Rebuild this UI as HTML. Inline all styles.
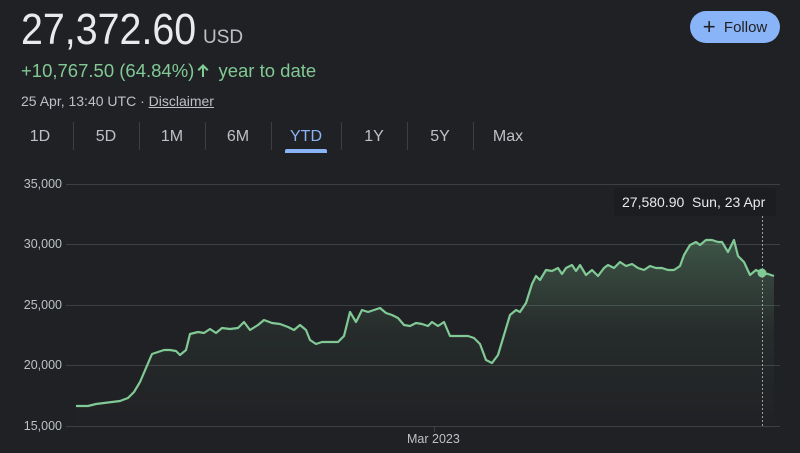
<!DOCTYPE html>
<html><head><style>
body{margin:0;width:800px;height:453px;background:#202124;font-family:"Liberation Sans",Arial,sans-serif;overflow:hidden;position:relative;color:#e8eaed}
.a{position:absolute;white-space:nowrap}
.tab{position:absolute;top:128px;font-size:16px;color:#bdc1c6;transform:translateX(-50%)}
.sep{position:absolute;top:122px;width:1px;height:28px;background:#3c4043}
.yl{position:absolute;left:0;width:62px;text-align:right;font-size:12.5px;color:#bdc1c6}
</style></head><body>
<div class="a" style="left:21px;top:5px;font-size:44px;color:#e8eaed;transform:scaleX(0.895);transform-origin:0 0">27,372.60</div>
<div class="a" style="left:203px;top:27px;font-size:19px;color:#bdc1c6">USD</div>
<div class="a" style="left:21px;top:60px;font-size:18.5px;color:#81c995">+10,767.50 (64.84%)<svg width="16" height="16" viewBox="0 0 16 16" style="vertical-align:-1px;margin:0 2px 0 1px"><path d="M8 2 L2.5 7.5 L4 9 L7 6 L7 15 L9 15 L9 6 L12 9 L13.5 7.5 Z" fill="#81c995"/></svg> year to date</div>
<div class="a" style="left:21px;top:93px;font-size:14px;color:#bdc1c6">25 Apr, 13:40 UTC · <span style="text-decoration:underline">Disclaimer</span></div>
<div class="a" style="left:690px;top:11px;width:90px;height:32px;border-radius:16px;background:#8ab4f8;color:#202124;font-size:15px;line-height:32px;text-align:center"><span style="font-size:22px;vertical-align:-2px">+</span>&nbsp; Follow</div>
<div class="tab" style="left:40px">1D</div><div class="tab" style="left:106px">5D</div><div class="tab" style="left:172px">1M</div><div class="tab" style="left:238px">6M</div><div class="tab" style="left:306px;color:#8ab4f8">YTD</div><div class="tab" style="left:374px">1Y</div><div class="tab" style="left:440px">5Y</div><div class="tab" style="left:508px">Max</div>
<div class="sep" style="left:73px"></div><div class="sep" style="left:139px"></div><div class="sep" style="left:205px"></div><div class="sep" style="left:271px"></div><div class="sep" style="left:341px"></div><div class="sep" style="left:407px"></div><div class="sep" style="left:473px"></div>
<div class="a" style="left:285px;top:149px;width:42px;height:4px;border-radius:2px 2px 0 0;background:#8ab4f8"></div>
<div class="yl" style="top:177px">35,000</div><div class="yl" style="top:237px">30,000</div><div class="yl" style="top:298px">25,000</div><div class="yl" style="top:358px">20,000</div><div class="yl" style="top:419px">15,000</div>
<svg class="a" style="left:0;top:0" width="800" height="453">
<defs><linearGradient id="g" x1="0" y1="0" x2="0" y2="1"><stop offset="0" stop-color="#81c995" stop-opacity=".3"/><stop offset=".5" stop-color="#81c995" stop-opacity=".06"/><stop offset="1" stop-color="#81c995" stop-opacity="0"/></linearGradient></defs>
<g stroke="#3c4043" stroke-width="1"><line x1="66" y1="184.5" x2="780" y2="184.5"/><line x1="66" y1="244.5" x2="780" y2="244.5"/><line x1="66" y1="305.5" x2="780" y2="305.5"/><line x1="66" y1="365.5" x2="780" y2="365.5"/><line x1="66" y1="426.5" x2="780" y2="426.5"/><line x1="434.5" y1="426" x2="434.5" y2="432"/></g>
<polygon fill="url(#g)" points="76,406 88,406 96,404 104,403 112,402 120,401 128,398 134,392 140,382 146,368 152,354 158,352 164,350 170,350 176,351 180,355 186,350 190,334 198,332 204,333 210,329 216,333 222,328 230,329 238,328 244,322 250,330 258,325 264,320 272,323 280,324 288,327 294,330 300,325 306,330 310,340 316,344 322,342 330,342 338,342 344,336 350,312 356,322 362,310 368,312 374,310 380,308 386,313 392,315 398,318 404,325 410,326 416,323 422,324 428,326 432,322 438,326 444,322 450,336 456,336 462,336 468,336 474,338 480,344 486,360 492,363 498,355 504,335 510,315 516,310 520,312 526,303 532,284 536,276 540,280 546,270 552,271 558,268 562,274 566,268 572,265 576,271 580,265 586,275 592,270 598,276 604,268 608,265 614,268 620,262 626,266 632,264 638,268 644,270 650,266 656,268 662,268 668,270 674,270 680,266 684,255 690,245 696,242 700,245 706,240 712,240 718,242 722,242 728,252 734,240 738,256 744,262 750,275 756,270 762,273 768,274 774,276 774,426 76,426"/>
<polyline fill="none" stroke="#81c995" stroke-width="2.2" stroke-linejoin="round" points="76,406 88,406 96,404 104,403 112,402 120,401 128,398 134,392 140,382 146,368 152,354 158,352 164,350 170,350 176,351 180,355 186,350 190,334 198,332 204,333 210,329 216,333 222,328 230,329 238,328 244,322 250,330 258,325 264,320 272,323 280,324 288,327 294,330 300,325 306,330 310,340 316,344 322,342 330,342 338,342 344,336 350,312 356,322 362,310 368,312 374,310 380,308 386,313 392,315 398,318 404,325 410,326 416,323 422,324 428,326 432,322 438,326 444,322 450,336 456,336 462,336 468,336 474,338 480,344 486,360 492,363 498,355 504,335 510,315 516,310 520,312 526,303 532,284 536,276 540,280 546,270 552,271 558,268 562,274 566,268 572,265 576,271 580,265 586,275 592,270 598,276 604,268 608,265 614,268 620,262 626,266 632,264 638,268 644,270 650,266 656,268 662,268 668,270 674,270 680,266 684,255 690,245 696,242 700,245 706,240 712,240 718,242 722,242 728,252 734,240 738,256 744,262 750,275 756,270 762,273 768,274 774,276"/>
<line x1="762.5" y1="216" x2="762.5" y2="426" stroke="#9aa0a6" stroke-width="1" stroke-dasharray="2,2"/>
<circle cx="762" cy="273" r="4.5" fill="#81c995"/>
<rect x="614" y="188" width="162" height="28" rx="3" fill="#1c1d20"/>
</svg>
<div class="a" style="left:622px;top:194px;font-size:14px;color:#e8eaed">27,580.90&nbsp; Sun, 23 Apr</div>
<div class="a" style="left:407px;top:432px;font-size:12.5px;color:#bdc1c6">Mar 2023</div>
</body></html>
